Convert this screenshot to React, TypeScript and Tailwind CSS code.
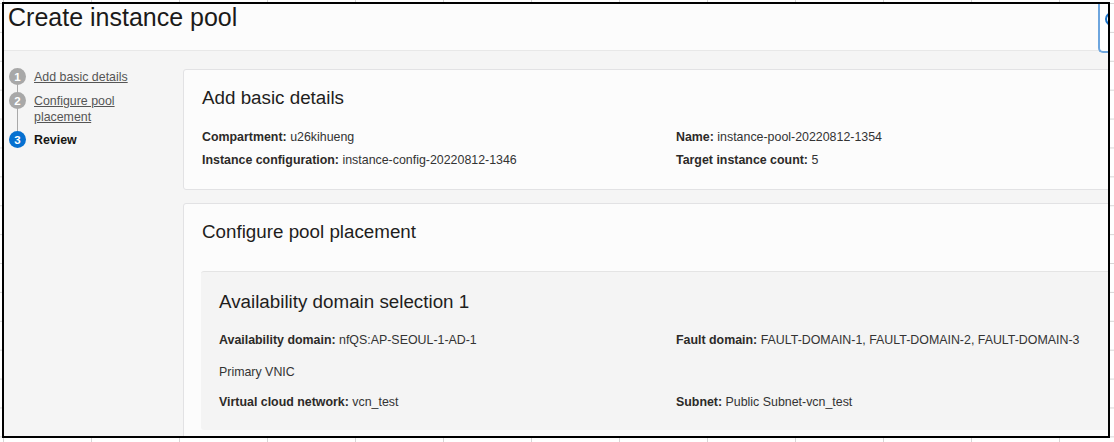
const steps = [
  { n: 1, label: ['Add basic details'], done: true },
  { n: 2, label: ['Configure pool', 'placement'], done: true },
  { n: 3, label: ['Review'], done: false },
]

function Field({ label, value }: { label: string; value: string }) {
  return (
    <div className="h-[23px] leading-[23px] whitespace-nowrap">
      <span className="font-bold text-[#2c2a28]">{label}</span> {value}
    </div>
  )
}

export default function App() {
  return (
    <div className="min-h-screen w-[1114px] h-[442px] bg-white bg-[linear-gradient(to_right,#d6d6d6_1px,transparent_1px),linear-gradient(to_bottom,#d6d6d6_1px,transparent_1px)] bg-[size:88px_28.9px] bg-[position:3px_3px] pt-[2px] pl-[2px] font-['Liberation_Sans',Arial,sans-serif] text-[#333]">
      <div className="relative w-[1108px] h-[436px] border-2 border-black overflow-hidden bg-[#f5f5f5] flex flex-col">
        {/* Page header */}
        <div className="h-[47px] shrink-0 bg-[#fcfcfc] border-b border-[#e8e8e8] pl-1 pt-px">
          <h1 className="text-[25px] leading-[25px] text-[#1b1a19]">Create instance pool</h1>
        </div>

        {/* help button, cut off at the right edge */}
        <div className="absolute right-0 top-0 w-[10px] h-[49px] border-l-2 border-b-2 border-[#6ea6de] rounded-bl-[5px] bg-white">
          <div className="absolute left-[5px] top-[8px] w-[14px] h-[14px] rounded-full border-2 border-[#1a73c9]" />
        </div>

        <div className="flex flex-1 min-h-0">
          {/* Steps */}
          <div className="w-[179px] shrink-0 pt-[18px] pl-[5px] relative">
            <div className="absolute left-[13px] top-[34px] w-px h-[50px] bg-[#a9a9a9]" />
            {steps.map((s, i) => (
              <div
                key={s.n}
                className={`relative flex items-start gap-[8px] text-[12.4px] leading-4 ${i === 1 ? 'mt-2' : i === 2 ? 'mt-[7px]' : ''}`}
              >
                <div
                  className={`w-[17px] h-[17px] -mt-px shrink-0 rounded-full flex items-center justify-center text-white text-[11.5px] font-bold ${s.done ? 'bg-[#a8a8a8]' : 'bg-[#0670d0]'}`}
                >
                  {s.n}
                </div>
                <div className={s.done ? 'text-[#555] underline' : 'text-[#161513] font-bold'}>
                  {s.label.map(l => (
                    <div key={l}>{l}</div>
                  ))}
                </div>
              </div>
            ))}
          </div>

          {/* Review cards */}
          <div className="flex-1 min-w-0 pt-[18px]">
            <div className="w-[1000px] bg-[#fcfcfc] border border-[#e2e2e4] rounded-[3px] px-[18px] pt-4 pb-[17px]">
              <h2 className="text-[18.8px] leading-6 text-[#1f1e1d]">Add basic details</h2>
              <div className="mt-4 grid grid-cols-[474px_1fr] text-[12.4px]">
                <Field label="Compartment:" value="u26kihueng" />
                <Field label="Name:" value="instance-pool-20220812-1354" />
                <Field label="Instance configuration:" value="instance-config-20220812-1346" />
                <Field label="Target instance count:" value="5" />
              </div>
            </div>

            <div className="mt-[13px] w-[1000px] h-[260px] bg-[#fcfcfc] border border-[#e2e2e4] rounded-[3px] px-[18px] pt-4">
              <h2 className="text-[18.8px] leading-6 text-[#1f1e1d]">Configure pool placement</h2>
              <div className="mt-[27px] -ml-px bg-[#f4f4f4] border-t border-[#e4e4e4] rounded-[3px] pl-[18px] pt-[18px] pb-[18px]">
                <h3 className="text-[18.8px] leading-6 text-[#1f1e1d]">Availability domain selection 1</h3>
                <div className="mt-4 grid grid-cols-[457px_1fr] text-[12.4px] leading-5">
                  <div className="h-5 whitespace-nowrap">
                    <span className="font-bold text-[#2c2a28]">Availability domain:</span> nfQS:AP-SEOUL-1-AD-1
                  </div>
                  <div className="h-5 whitespace-nowrap">
                    <span className="font-bold text-[#2c2a28]">Fault domain:</span> FAULT-DOMAIN-1, FAULT-DOMAIN-2, FAULT-DOMAIN-3
                  </div>
                  <div className="h-5 mt-3">Primary VNIC</div>
                  <div className="h-5 mt-3" />
                  <div className="h-5 mt-[10px] whitespace-nowrap">
                    <span className="font-bold text-[#2c2a28]">Virtual cloud network:</span> vcn_test
                  </div>
                  <div className="h-5 mt-[10px] whitespace-nowrap">
                    <span className="font-bold text-[#2c2a28]">Subnet:</span> Public Subnet-vcn_test
                  </div>
                </div>
              </div>
            </div>
          </div>
        </div>
      </div>
    </div>
  )
}
